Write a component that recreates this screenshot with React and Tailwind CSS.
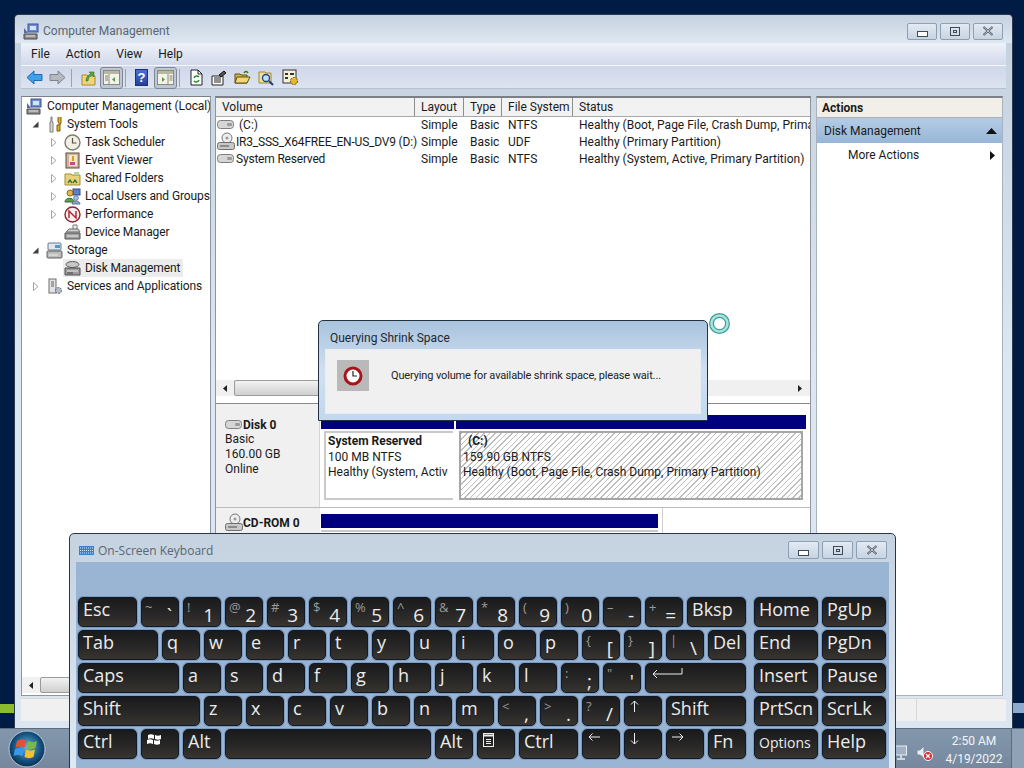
import React from "react";

const FONT = "font-['Roboto',sans-serif]";

const Expander = ({ open }) =>
  open ? (
    <svg width="9" height="9" viewBox="0 0 9 9">
      <path d="M7.5 1.5v6h-6z" fill="#404040" />
    </svg>
  ) : (
    <svg width="9" height="9" viewBox="0 0 9 9">
      <path d="M2.5 0.5l4.5 4-4.5 4z" fill="#fff" stroke="#a6a6a6" />
    </svg>
  );

const MgmtIcon = () => (
  <svg width="17" height="17" viewBox="0 0 17 17">
    <rect x="5" y="1" width="10" height="8" fill="#6f8fd8" stroke="#3b4f8c" />
    <rect x="7" y="3" width="6" height="4" fill="#d5e2fb" />
    <path d="M1 11h13v5H1z" fill="#8f8f8f" stroke="#4b4b4b" />
    <path d="M3 13h9" stroke="#e6e6e6" />
    <path d="M1 5l4 5H1z" fill="#4c6ab8" />
  </svg>
);
const ToolsIcon = () => (
  <svg width="17" height="17" viewBox="0 0 17 17">
    <path d="M5 1v5h-1v10h3V6H6V1z" fill="#d9d9d9" stroke="#7a7a7a" />
    <path d="M12 1v5l1 1v2h-2v6h3V9l1-2V1" fill="#e3b321" stroke="#7c5b10" />
  </svg>
);
const ClockIcon = () => (
  <svg width="17" height="17" viewBox="0 0 17 17">
    <circle cx="8.5" cy="8.5" r="7.5" fill="#f2efe4" stroke="#7d7d70" strokeWidth="1.4" />
    <path d="M8.5 4v5h4" fill="none" stroke="#55554c" strokeWidth="1.2" />
  </svg>
);
const EventIcon = () => (
  <svg width="17" height="17" viewBox="0 0 17 17">
    <rect x="2" y="1" width="13" height="15" fill="#c8b6a0" stroke="#5f4a3a" />
    <rect x="5" y="3" width="8" height="11" fill="#f2e7c6" />
    <path d="M9 4v5" stroke="#d8a012" strokeWidth="2" />
    <rect x="6" y="10" width="5" height="3" fill="#c14a8b" />
  </svg>
);
const SharedIcon = () => (
  <svg width="17" height="17" viewBox="0 0 17 17">
    <path d="M1 4h6l1 1h8v10H1z" fill="#ead27a" stroke="#a58b32" />
    <path d="M4 13l2-3 2 3M9 13l2-3 2 3" fill="none" stroke="#3f7d32" strokeWidth="1.4" />
    <path d="M10 2h5v3h-5z" fill="#bcd1a0" />
  </svg>
);
const UsersIcon = () => (
  <svg width="17" height="17" viewBox="0 0 17 17">
    <rect x="9" y="1" width="7" height="6" fill="#5f7fc8" stroke="#344a88" />
    <circle cx="6" cy="5" r="3" fill="#e2b64a" stroke="#8b6b1d" />
    <path d="M1 14c0-5 9-5 9 0z" fill="#5f9d54" stroke="#2f6a2b" />
    <circle cx="12" cy="10" r="2.3" fill="#a9c2e8" stroke="#6281b0" />
    <path d="M8 16c0-4 8-4 8 0z" fill="#8fa6c8" stroke="#5b7398" />
  </svg>
);
const PerfIcon = () => (
  <svg width="17" height="17" viewBox="0 0 17 17">
    <circle cx="8.5" cy="8.5" r="7.5" fill="#f7eeee" stroke="#8b2431" strokeWidth="1.4" />
    <path d="M5 12V5l7 7V5" fill="none" stroke="#b5283a" strokeWidth="1.5" />
  </svg>
);
const DeviceIcon = () => (
  <svg width="17" height="17" viewBox="0 0 17 17">
    <path d="M9 1h4v5H9z" fill="#eee" stroke="#777" />
    <path d="M2 8l3-3h9l2 3z" fill="#d2d2d2" stroke="#666" />
    <path d="M1 9h15v6H1z" fill="#a0a0a0" stroke="#555" />
    <path d="M3 12h11" stroke="#eee" />
  </svg>
);
const StorageIcon = () => (
  <svg width="17" height="17" viewBox="0 0 17 17">
    <rect x="2" y="1" width="13" height="7" rx="1" fill="#dfe6ef" stroke="#68788c" />
    <rect x="9" y="3" width="5" height="3" fill="#3f9fd8" />
    <rect x="1" y="9" width="15" height="7" rx="1" fill="#bcbcbc" stroke="#5e5e5e" />
    <path d="M3 13h9" stroke="#eee" />
  </svg>
);
const DiskMgmtIcon = () => (
  <svg width="17" height="17" viewBox="0 0 17 17">
    <ellipse cx="8.5" cy="4.5" rx="6.5" ry="3" fill="#c6c6c6" stroke="#5d5d5d" />
    <path d="M1 8h15v7H1z" fill="#9d9d9d" stroke="#4f4f4f" />
    <path d="M3 11h11" stroke="#e8e8e8" />
    <path d="M3 13h6" stroke="#444" />
  </svg>
);
const ServicesIcon = () => (
  <svg width="17" height="17" viewBox="0 0 17 17">
    <rect x="3" y="1" width="7" height="14" fill="#e2e2e2" stroke="#6e6e6e" />
    <path d="M5 4h3M5 6h3M5 8h3" stroke="#666" />
    <circle cx="12.5" cy="12.5" r="3" fill="#b4bcc6" stroke="#5d6670" strokeDasharray="2 1" />
  </svg>
);

const DriveIcon = () => (
  <svg width="17" height="11" viewBox="0 0 17 11">
    <rect x="0.5" y="1.5" width="16" height="8" rx="3" fill="#d6d6d6" stroke="#7e7e7e" />
    <rect x="10" y="4" width="5" height="3" rx="1" fill="#9c9c9c" />
  </svg>
);
const CdDriveIcon = () => (
  <svg width="18" height="19" viewBox="0 0 18 19">
    <circle cx="10" cy="6" r="5" fill="#eee" stroke="#777" />
    <circle cx="10" cy="6" r="1.5" fill="#999" />
    <rect x="0.5" y="10.5" width="17" height="7" rx="2" fill="#c8c8c8" stroke="#6e6e6e" />
    <rect x="3" y="13" width="9" height="2" fill="#8b8b8b" />
  </svg>
);

const ArrowIcon = ({ dir, fill, stroke }) => (
  <svg width="17" height="15" viewBox="0 0 17 15" className={dir === "right" ? "rotate-180" : ""}>
    <path d="M1 7.5L8 1v3.5h8v6H8V14z" fill={fill} stroke={stroke} />
  </svg>
);

const PanelToggle = ({ right }) => (
  <span className="w-[23px] h-[22px] rounded-[3px] border border-[#7f8792] bg-[#bcc6d6] flex items-center justify-center">
    <svg width="17" height="15" viewBox="0 0 17 15">
      <rect x="0.5" y="0.5" width="16" height="14" fill="#f3f3ea" stroke="#8a8a78" />
      <rect x="1" y="1" width="15" height="3" fill="#b7b7a4" />
      {right ? (
        <g>
          <path d="M11 4v10" stroke="#8a8a78" />
          <path d="M12.5 6h3M12.5 8h3M12.5 10h3" stroke="#7d7d6c" />
          <path d="M5 7l3 2.5L5 12z" fill="#5a9a4a" />
        </g>
      ) : (
        <g>
          <path d="M6 4v10" stroke="#8a8a78" />
          <path d="M2 6h3M2 8h3M2 10h3" stroke="#7d7d6c" />
          <path d="M12 7l-3 2.5 3 2.5z" fill="#5a9a4a" />
        </g>
      )}
    </svg>
  </span>
);

const Sep = () => <span className="w-px h-[18px] bg-[#9aa3b4]" />;

const Toolbar = () => (
  <div className="h-[23px] shrink-0 mx-[6px] pl-[5px] pt-px flex items-center bg-gradient-to-b from-[#cfd7e9] to-[#dde3f0] border-b border-[#b9c1cf]">
    <ArrowIcon dir="left" fill="#3ea0ea" stroke="#1c6fb5" />
    <span className="w-[6px]" />
    <ArrowIcon dir="right" fill="#b4b8bf" stroke="#80858d" />
    <span className="w-[5px]" />
    <Sep />
    <span className="w-[9px]" />
    <svg width="15" height="16" viewBox="0 0 15 16">
      <path d="M1 5h5l1 1h7v9H1z" fill="#f0d47c" stroke="#a98a2d" />
      <path d="M5 11c0-4 2-6 5-7L8 2l5 0v5l-2-2c-2 1-4 3-4 6z" fill="#5aa83c" stroke="#2f7420" strokeWidth="0.6" />
    </svg>
    <span className="w-[4px]" />
    <PanelToggle />
    <span className="w-[2px]" />
    <Sep />
    <span className="w-[9px]" />
    <span className="w-[13px] h-[17px] bg-gradient-to-b from-[#4a70d8] to-[#26409c] border border-[#1c2f7d] text-white text-[13px] leading-[15px] font-bold text-center font-['Liberation_Sans',sans-serif]">
      ?
    </span>
    <span className="w-[6px]" />
    <PanelToggle right />
    <span className="w-[2px]" />
    <Sep />
    <span className="w-[9px]" />
    <svg width="15" height="17" viewBox="0 0 15 17">
      <path d="M2 1h7l4 4v11H2z" fill="#fff" stroke="#222" />
      <path d="M9 1v4h4" fill="none" stroke="#222" />
      <path d="M5 9a3 3 0 0 1 5-1M10 11a3 3 0 0 1-5 1" fill="none" stroke="#2c8a2c" strokeWidth="1.5" />
    </svg>
    <span className="w-[7px]" />
    <svg width="16" height="16" viewBox="0 0 16 16">
      <path d="M1 6h11v9H1z" fill="#fff" stroke="#222" />
      <path d="M3 8h7M3 10h7M3 12h7" stroke="#222" />
      <path d="M8 5l5-4 2 2-5 4z" fill="#555" stroke="#111" />
    </svg>
    <span className="w-[7px]" />
    <svg width="17" height="15" viewBox="0 0 17 15">
      <path d="M1 4h5l1 1h6v8H1z" fill="#d8b53c" stroke="#5f4f14" />
      <path d="M3 7h13l-3 6H1z" fill="#efd877" stroke="#5f4f14" />
      <path d="M10 3c1-2 3-2 4 0" fill="none" stroke="#2f7420" strokeWidth="1.4" />
    </svg>
    <span className="w-[7px]" />
    <svg width="16" height="16" viewBox="0 0 16 16">
      <path d="M1 2h6l1 1h5v10H1z" fill="#efe09c" stroke="#9c8a3a" />
      <circle cx="8" cy="8" r="3.5" fill="#bfe0f5" stroke="#1e3d8a" strokeWidth="1.3" />
      <path d="M11 11l4 4" stroke="#1e3d8a" strokeWidth="2" />
    </svg>
    <span className="w-[8px]" />
    <svg width="17" height="17" viewBox="0 0 17 17">
      <rect x="1" y="1" width="13" height="13" fill="#f4f0dc" stroke="#333" />
      <path d="M3 4h3v2H3zM3 8h3v2H3zM8 4h4v2H8z" fill="#333" />
      <circle cx="12" cy="12" r="3.5" fill="#e5b82c" stroke="#6c5510" strokeDasharray="2 1" />
    </svg>
  </div>
);

const treeRows = [
  { label: "Computer Management (Local)", icon: MgmtIcon, pad: "pl-[3px]" },
  { label: "System Tools", icon: ToolsIcon, pad: "pl-[9px]", open: true },
  { label: "Task Scheduler", icon: ClockIcon, pad: "pl-[27px]", closed: true },
  { label: "Event Viewer", icon: EventIcon, pad: "pl-[27px]", closed: true },
  { label: "Shared Folders", icon: SharedIcon, pad: "pl-[27px]", closed: true },
  { label: "Local Users and Groups", icon: UsersIcon, pad: "pl-[27px]", closed: true },
  { label: "Performance", icon: PerfIcon, pad: "pl-[27px]", closed: true },
  { label: "Device Manager", icon: DeviceIcon, pad: "pl-[27px]", blank: true },
  { label: "Storage", icon: StorageIcon, pad: "pl-[9px]", open: true },
  { label: "Disk Management", icon: DiskMgmtIcon, pad: "pl-[27px]", blank: true, selected: true },
  { label: "Services and Applications", icon: ServicesIcon, pad: "pl-[9px]", closed: true },
];

const Tree = () => (
  <div className="w-[190px] h-[600px] shrink-0 bg-white border border-[#8d959e] border-t-[#7c8086] flex flex-col overflow-hidden">
    <div className="flex-1">
      {treeRows.map((row) => {
        const Icon = row.icon;
        return (
          <div key={row.label} className={`h-[18px] flex items-center whitespace-nowrap ${row.pad}`}>
            {(row.open || row.closed || row.blank) && (
              <span className="w-[14px] shrink-0 flex items-center">
                {row.open && <Expander open />}
                {row.closed && <Expander />}
              </span>
            )}
            <span
              className={`h-[18px] flex items-center gap-[4px] pl-px pr-[3px] ${
                row.selected ? "bg-[#ececec]" : ""
              }`}
            >
              <Icon />
              <span className="tracking-[-0.1px]">{row.label}</span>
            </span>
          </div>
        );
      })}
    </div>
    <div className="h-[16px] shrink-0 flex items-center bg-[#f0f0f0] mb-[2px]">
      <svg width="18" height="9" viewBox="0 0 18 9">
        <path d="M11 1v7L7 4.5z" fill="#222" />
      </svg>
      <span className="h-[16px] w-[150px] bg-gradient-to-b from-[#f2f2f2] to-[#cfcfcf] border border-[#9a9a9a] rounded-[2px]" />
    </div>
  </div>
);

const HeaderCell = ({ w, children }) => (
  <div className={`${w} shrink-0 h-full pl-[6px] flex items-center whitespace-nowrap border-r border-[#8e8e8e]`}>{children}</div>
);

const volumes = [
  { name: "(C:)", nameClass: "ml-[3px]", icon: <DriveIcon />, fs: "NTFS", status: "Healthy (Boot, Page File, Crash Dump, Primary Partition)" },
  { name: "IR3_SSS_X64FREE_EN-US_DV9 (D:)", nameClass: "tracking-[-0.2px]", icon: <CdDriveIcon />, fs: "UDF", status: "Healthy (Primary Partition)" },
  { name: "System Reserved", nameClass: "tracking-[-0.2px]", icon: <DriveIcon />, fs: "NTFS", status: "Healthy (System, Active, Primary Partition)" },
];

const VolumeList = () => (
  <div className="h-[305px] shrink-0 flex flex-col">
    <div className="h-[19px] shrink-0 flex bg-[#f2f2f2] border-b border-[#a8a8a8]">
      <HeaderCell w="w-[199px]">Volume</HeaderCell>
      <HeaderCell w="w-[49px]">Layout</HeaderCell>
      <HeaderCell w="w-[38px]">Type</HeaderCell>
      <HeaderCell w="w-[71px]">File System</HeaderCell>
      <div className="flex-1 pl-[6px] flex items-center">Status</div>
    </div>
    <div className="flex-1 bg-white overflow-hidden">
      <div className="-mt-px">
        {volumes.map((v) => (
          <div key={v.name} className="h-[17px] flex items-center whitespace-nowrap">
            <div className="w-[199px] shrink-0 pl-[1px] flex items-center">
              <span className="w-[19px] h-[17px] flex items-center shrink-0">{v.icon}</span>
              <span className={v.nameClass}>{v.name}</span>
            </div>
            <div className="w-[49px] shrink-0 pl-[6px]">Simple</div>
            <div className="w-[38px] shrink-0 pl-[6px]">Basic</div>
            <div className="w-[71px] shrink-0 pl-[6px]">{v.fs}</div>
            <div className="pl-[6px]">{v.status}</div>
          </div>
        ))}
      </div>
    </div>
    <div className="h-[16px] shrink-0 mb-[7px] flex items-center bg-[#f0f0f0]">
      <svg width="18" height="9" viewBox="0 0 18 9">
        <path d="M11 1v7L7 4.5z" fill="#222" />
      </svg>
      <span className="h-[16px] w-[220px] bg-gradient-to-b from-[#f2f2f2] to-[#cfcfcf] border border-[#9a9a9a] rounded-[2px]" />
      <span className="flex-1" />
      <svg width="18" height="9" viewBox="0 0 18 9">
        <path d="M6 1v7l4-3.500z" fill="#222" />
      </svg>
    </div>
  </div>
);

const DiskGraph = () => (
  <div className="flex-1 bg-white border-t border-[#8a8a8a] overflow-hidden">
    <div className="h-[104px] flex border-b border-[#bcbcbc]">
      <div className="w-[104px] shrink-0 bg-[#f0f0f0] pl-[9px] pt-[13px] border-r border-[#d5d5d5]">
        <div className="flex items-center gap-px font-bold h-[15px]">
          <DriveIcon />
          <span>Disk 0</span>
        </div>
        <div className="leading-[15px]">Basic</div>
        <div className="leading-[15px]">160.00 GB</div>
        <div className="leading-[15px]">Online</div>
      </div>
      <div className="w-[485px] shrink-0 ml-[1px] pt-[11px] flex flex-col">
        <div className="h-[14px] flex shrink-0">
          <span className="w-[133px] bg-[#00007f]" />
          <span className="w-[2px]" />
          <span className="flex-1 bg-[#00007f]" />
        </div>
        <div className="flex pt-[2px]">
          <div className="w-[129px] h-[69px] ml-[3px] px-[2px] pt-px bg-white border-2 border-[#c9c9c9] border-r-0 leading-[15px] overflow-hidden whitespace-nowrap">
            <div className="font-bold">System Reserved</div>
            <div className="mt-px">100 MB NTFS</div>
            <div className="w-[120px] overflow-hidden">Healthy (System, Active, Primary Partition)</div>
          </div>
          <div className="w-[344px] h-[69px] ml-[6px] pl-[2px] pt-px border-2 border-[#a6a6a6] bg-[repeating-linear-gradient(135deg,#bdbdbd_0,#bdbdbd_1px,#ffffff_1px,#ffffff_4px)] leading-[15px] whitespace-nowrap">
            <div className="font-bold pl-[5px]">(C:)</div>
            <div className="mt-px">159.90 GB NTFS</div>
            <div>Healthy (Boot, Page File, Crash Dump, Primary Partition)</div>
          </div>
        </div>
      </div>
    </div>
    <div className="flex">
      <div className="w-[104px] shrink-0 bg-[#f0f0f0] pl-[9px] pt-[5px] h-[190px]">
        <div className="flex items-center font-bold">
          <CdDriveIcon />
          <span>CD-ROM 0</span>
        </div>
      </div>
      <div className="w-[342px] shrink-0 ml-[1px] pt-[6px] border-r border-[#cfcfcf] pr-[4px]">
        <div className="h-[14px] bg-[#00007f]" />
        <div className="mt-[2px] h-[20px] border-t-2 border-[#c9c9c9]" />
      </div>
    </div>
  </div>
);

const WinButtons = ({ size, btn }) => (
  <div className={`flex gap-[3px] ${size}`}>
    <span className={`${btn} h-full border border-[#8e9fb2] rounded-[2px] bg-gradient-to-b from-[#e2eaf3] to-[#c8d4e2] flex items-end justify-center pb-[2px]`}>
      <span className="w-[11px] h-[6px] border border-[#3c4a5a] bg-white" />
    </span>
    <span className={`${btn} h-full border border-[#8e9fb2] rounded-[2px] bg-gradient-to-b from-[#e2eaf3] to-[#c8d4e2] flex items-center justify-center`}>
      <span className="w-[10px] h-[9px] border border-[#3c4a5a] flex items-center justify-center">
        <span className="w-[4px] h-[3px] border border-[#3c4a5a]" />
      </span>
    </span>
    <span className={`${btn} h-full border border-[#8e9fb2] rounded-[2px] bg-gradient-to-b from-[#e2eaf3] to-[#c8d4e2] flex items-center justify-center`}>
      <svg width="12" height="10" viewBox="0 0 12 10">
        <path d="M1.500 1l9 8M10.500 1l-9 8" stroke="#3c4a5a" strokeWidth="2" />
        <path d="M1.500 1l9 8M10.500 1l-9 8" stroke="#fff" strokeWidth="0.7" />
      </svg>
    </span>
  </div>
);

const MainWindow = () => (
  <div className="absolute left-[14px] top-[14px] w-[999px] h-[714px] rounded-t-[5px] border border-[#2e3b4d] border-b-0 bg-gradient-to-b from-[#c3d0df] via-[#dde7f1] to-[#dbe6f1] flex flex-col overflow-hidden text-[12px] text-[#1a1a1a]">
    <div className="h-[28px] shrink-0 flex items-center pt-[4px] pl-[8px] pr-[9px] bg-gradient-to-b from-[#c5d1df] to-[#dfe8f1]">
      <MgmtIcon />
      <span className="ml-[3px] text-[#5a6672]">Computer Management</span>
      <span className="flex-1" />
      <WinButtons size="h-[17px]" btn="w-[30px]" />
    </div>
    <div className="h-[23px] shrink-0 mx-[6px] pl-[10px] flex items-center gap-[16px] bg-gradient-to-b from-[#eef2f9] to-[#d2d9ea] border-b border-[#f6f8fc]">
      <span>File</span>
      <span>Action</span>
      <span>View</span>
      <span>Help</span>
    </div>
    <Toolbar />
    <div className="flex mx-[6px] mt-[7px] gap-[4px] shrink-0">
      <Tree />
      <div className="w-[596px] h-[600px] shrink-0 border-t-2 border-t-[#7c8086] border-x border-x-[#8d959e] border-b border-b-[#8d959e] bg-white flex flex-col overflow-hidden">
        <VolumeList />
        <DiskGraph />
      </div>
      <div className="w-[187px] h-[600px] shrink-0 ml-[1px] bg-white border-t-2 border-t-[#7c8086] border-x border-x-[#a9b3bf] border-b border-b-[#a9b3bf]">
        <div className="h-[20px] bg-[#f2efe9] pl-[5px] pt-px flex items-center font-bold border-b border-[#b0b0b0]">Actions</div>
        <div className="h-[25px] pl-[7px] pr-[5px] pt-px flex items-center justify-between bg-gradient-to-b from-[#b4cce6] to-[#98b6d8]">
          <span>Disk Management</span>
          <svg width="11" height="6" viewBox="0 0 11 6">
            <path d="M0 6l5.500-6L11 6z" fill="#111" />
          </svg>
        </div>
        <div className="h-[24px] pl-[31px] pr-[7px] flex items-center justify-between">
          <span>More Actions</span>
          <svg width="5" height="9" viewBox="0 0 5 9">
            <path d="M0 0l5 4.500L0 9z" fill="#111" />
          </svg>
        </div>
      </div>
    </div>
    <div className="h-[23px] shrink-0 mx-[6px] mt-[2px] flex bg-[#f0f0f0] border-t border-[#d9d9d9]">
      <span className="w-[896px] border-r border-[#d9d9d9]" />
    </div>
  </div>
);

const ShrinkDialog = () => (
  <div className="absolute left-[318px] top-[320px] w-[390px] h-[101px] rounded-t-[5px] border border-[#26313f] bg-gradient-to-b from-[#a9c3de] via-[#cfe0f0] to-[#c2d8ee] px-[6px] flex flex-col text-[12px] text-[#1c2733]">
    <div className="h-[28px] shrink-0 flex items-center pl-[5px] pt-[6px]">Querying Shrink Space</div>
    <div className="h-[65px] shrink-0 bg-[#f0f0f0] flex items-start pl-[11px] pt-[10px] border border-[#e6edf5]">
      <span className="w-[32px] h-[31px] bg-[#b9b9b9] flex items-center justify-center shrink-0">
        <svg width="20" height="20" viewBox="0 0 20 20">
          <circle cx="10" cy="10" r="8" fill="#fff" stroke="#a8141b" strokeWidth="3" />
          <path d="M10 5v5h4" fill="none" stroke="#222" strokeWidth="1.200" />
        </svg>
      </span>
      <span className="ml-[22px] mt-[8px] text-[11px] tracking-[-0.14px] text-[#222] whitespace-nowrap">
        Querying volume for available shrink space, please wait...
      </span>
    </div>
  </div>
);

const BusyCursor = () => (
  <svg className="absolute left-[708px] top-[312px]" width="23" height="23" viewBox="0 0 23 23">
    <circle cx="11.500" cy="11.500" r="8" fill="none" stroke="#3d9f9a" strokeWidth="5" />
    <circle cx="11.500" cy="11.500" r="8" fill="none" stroke="#a9e2dc" strokeWidth="2.500" />
  </svg>
);

const WinFlag = () => (
  <svg width="15" height="13" viewBox="0 0 15 13">
    <path d="M1 2c2-1 4-1 6 0v4c-2-1-4-1-6 0z" fill="#fff" />
    <path d="M8 2c2 1 4 1 6 0v4c-2 1-4 1-6 0z" fill="#fff" />
    <path d="M0 7c2-1 4-1 6 0v4c-2-1-4-1-6 0z" fill="#fff" />
    <path d="M7 7c2 1 4 1 6 0v4c-2 1-4 1-6 0z" fill="#fff" />
  </svg>
);

const EnterArrow = () => (
  <svg width="32" height="12" viewBox="0 0 32 12">
    <path d="M31 1v6H2M6 3L2 7l4 4" fill="none" stroke="#eee" strokeWidth="1" />
  </svg>
);

const MenuKeyIcon = () => (
  <svg width="11" height="14" viewBox="0 0 11 14">
    <rect x="0.500" y="0.500" width="10" height="13" fill="none" stroke="#eee" />
    <path d="M1 2.500h9" stroke="#eee" strokeWidth="2" />
    <path d="M3 6.500h5M3 8.500h5M3 10.500h5" stroke="#eee" />
  </svg>
);

const KeyArrow = ({ d, w = 12, h = 12 }) => (
  <svg width={w} height={h} viewBox={`0 0 ${w} ${h}`}>
    <path d={d} fill="none" stroke="#eee" strokeWidth="1" />
  </svg>
);

const Key = ({ w = "w-[38px]", label, sup, icon, small }) => (
  <div
    className={`${w} h-[30px] shrink-0 rounded-[5px] border border-[#0d1a2b] bg-gradient-to-b from-[#1a1a1a] via-[#262626] to-[#38342f] shadow-[0_0_0_1px_#7d9abf] text-[#ececec] overflow-hidden`}
  >
    {sup ? (
      <div className="h-full flex justify-between px-[3px]">
        <span className="text-[13px] leading-[18px] text-[#9a9a9a]">{sup}</span>
        <span className="text-[19px] leading-[34px] pr-[3px]">{label}</span>
      </div>
    ) : icon ? (
      <div className="h-full pl-[5px] pt-[3px]">{icon}</div>
    ) : (
      <div className={`h-full pl-[4px] ${small ? "text-[14px] leading-[25px]" : "text-[18px] leading-[23px]"}`}>
        {label}
      </div>
    )}
  </div>
);

const keyRows = [
  [
    { label: "Esc", w: "w-[59px]" },
    { label: "`", sup: "~" },
    { label: "1", sup: "!" },
    { label: "2", sup: "@" },
    { label: "3", sup: "#" },
    { label: "4", sup: "$" },
    { label: "5", sup: "%" },
    { label: "6", sup: "^" },
    { label: "7", sup: "&" },
    { label: "8", sup: "*" },
    { label: "9", sup: "(" },
    { label: "0", sup: ")" },
    { label: "-", sup: "–" },
    { label: "=", sup: "+" },
    { label: "Bksp", w: "w-[59px]" },
  ],
  [
    { label: "Tab", w: "w-[80px]" },
    ..."qwertyuiop".split("").map((label) => ({ label })),
    { label: "[", sup: "{" },
    { label: "]", sup: "}" },
    { label: "\\", sup: "|" },
    { label: "Del" },
  ],
  [
    { label: "Caps", w: "w-[101px]" },
    ..."asdfghjkl".split("").map((label) => ({ label })),
    { label: ";", sup: ":" },
    { label: "'", sup: '"' },
    { icon: <EnterArrow />, w: "w-[101px]" },
  ],
  [
    { label: "Shift", w: "w-[122px]" },
    ..."zxcvbnm".split("").map((label) => ({ label })),
    { label: ",", sup: "<" },
    { label: ".", sup: ">" },
    { label: "/", sup: "?" },
    { icon: <KeyArrow d="M4.500 12V1M1 4.500L4.500 1 8 4.500" w={9} h={12} /> },
    { label: "Shift", w: "w-[80px]" },
  ],
  [
    { label: "Ctrl", w: "w-[59px]" },
    { icon: <WinFlag /> },
    { label: "Alt" },
    { label: "", w: "w-[206px]" },
    { label: "Alt" },
    { icon: <MenuKeyIcon /> },
    { label: "Ctrl", w: "w-[59px]" },
    { icon: <KeyArrow d="M12 4H1M4.500 0.500L1 4l3.500 3.500" /> },
    { icon: <KeyArrow d="M4.500 0V11M1 7.500L4.500 11 8 7.500" w={9} h={12} /> },
    { icon: <KeyArrow d="M0 4H11M7.500 0.500L11 4l-3.500 3.500" /> },
    { label: "Fn" },
  ],
];

const navRows = [
  [{ label: "Home" }, { label: "PgUp" }],
  [{ label: "End" }, { label: "PgDn" }],
  [{ label: "Insert" }, { label: "Pause" }],
  [{ label: "PrtScn" }, { label: "ScrLk" }],
  [{ label: "Options", small: true }, { label: "Help" }],
];

const KeyboardWindow = () => (
  <div className="absolute left-[69px] top-[533px] w-[827px] h-[236px] rounded-t-[5px] border border-[#2a3644] bg-gradient-to-b from-[#c5d2e0] to-[#dfe9f3] flex flex-col font-['Open_Sans',sans-serif]">
    <div className="h-[28px] shrink-0 flex items-center pt-[4px] pl-[9px] pr-[8px] text-[12px] text-[#5a6672]">
      <svg width="15" height="9" viewBox="0 0 15 9">
        <rect width="15" height="9" fill="#3f7fc8" />
        <path d="M1 2h13M1 4.500h13M1 7h13" stroke="#cfe4f8" strokeDasharray="1 1" />
      </svg>
      <span className="ml-[4px] mt-px">On-Screen Keyboard</span>
      <span className="flex-1" />
      <WinButtons size="h-[18px]" btn="w-[31px]" />
    </div>
    <div className="mx-[6px] flex-1 bg-[#9ab5d3] pl-[2px] pt-[35px] pb-[8px]">
      <div className="flex gap-[8px]">
        <div className="flex flex-col gap-[3px]">
          {keyRows.map((row, i) => (
            <div key={i} className="flex gap-[4px]">
              {row.map((k, j) => (
                <Key key={j} {...k} />
              ))}
            </div>
          ))}
        </div>
        <div className="flex flex-col gap-[3px]">
          {navRows.map((row, i) => (
            <div key={i} className="flex gap-[4px]">
              {row.map((k) => (
                <Key key={k.label} w="w-[64px]" {...k} />
              ))}
            </div>
          ))}
        </div>
      </div>
    </div>
  </div>
);

const StartOrb = () => (
  <svg width="38" height="38" viewBox="0 0 38 38">
    <defs>
      <radialGradient id="orb" cx="50%" cy="45%" r="55%">
        <stop offset="0%" stopColor="#6fb4e0" />
        <stop offset="70%" stopColor="#14507f" />
        <stop offset="100%" stopColor="#0b2f4f" />
      </radialGradient>
    </defs>
    <circle cx="19" cy="19" r="18" fill="url(#orb)" stroke="#b8c8d8" />
    <path d="M9 11c3-2 6-2 9-0.500l-1.500 7c-3-1.500-6-1.500-9 0z" fill="#e5502f" />
    <path d="M20 11c3 1.500 6 1.500 9 0l-1.500 7c-3 1.500-6 1.500-9 0z" fill="#7fb93a" />
    <path d="M7 19c3-1.500 6-1.500 9 0l-1.500 7c-3-1.500-6-1.500-9 0z" fill="#3a9ae0" />
    <path d="M18 19.500c3 1.500 6 1.500 9 0L25.500 27c-3 1.500-6 1.500-9 0z" fill="#f2c22e" />
  </svg>
);

const Taskbar = () => (
  <div className="h-[40px] shrink-0 bg-gradient-to-b from-[#8498ad] to-[#75889d] border-t border-[#5c6c7e] flex items-center text-[12px] text-[#f2f5f8]">
    <span className="ml-[8px]">
      <StartOrb />
    </span>
    <span className="flex-1" />
    <svg width="12" height="15" viewBox="0 0 12 15" className="mt-[8px]">
      <rect x="0.500" y="1" width="11" height="9" fill="#9fb2c6" stroke="#e8eef4" />
      <path d="M6 10v3M2 14h8" stroke="#e8eef4" strokeWidth="1.500" />
    </svg>
    <span className="w-[9px]" />
    <svg width="17" height="16" viewBox="0 0 17 16" className="mt-[8px]">
      <path d="M1 5h3l4-4v12L4 10H1z" fill="#e8eef4" stroke="#7a8a9a" />
      <circle cx="12" cy="11" r="4.500" fill="#d8262c" stroke="#fff" />
      <path d="M10 9l4 4M14 9l-4 4" stroke="#fff" strokeWidth="1.300" />
    </svg>
    <div className="w-[78px] pl-[4px] text-center leading-[18px] mt-[2px]">
      <div>2:50 AM</div>
      <div>4/19/2022</div>
    </div>
    <span className="w-[13px] h-full bg-[#8fa2b6] border-l border-[#5c6c7e]" />
  </div>
);

export default function App() {
  return (
    <div className={`w-[1024px] h-[768px] flex flex-col overflow-hidden relative bg-[#001c44] ${FONT}`}>
      <div className="flex-1 relative">
        <span className="absolute left-0 top-[704px] w-[14px] h-[9px] bg-[#8cbb2e]" />
        <span className="absolute right-0 top-[703px] w-[11px] h-[10px] bg-[#8aaad0]" />
        <MainWindow />
      </div>
      <Taskbar />
      <ShrinkDialog />
      <BusyCursor />
      <KeyboardWindow />
    </div>
  );
}
